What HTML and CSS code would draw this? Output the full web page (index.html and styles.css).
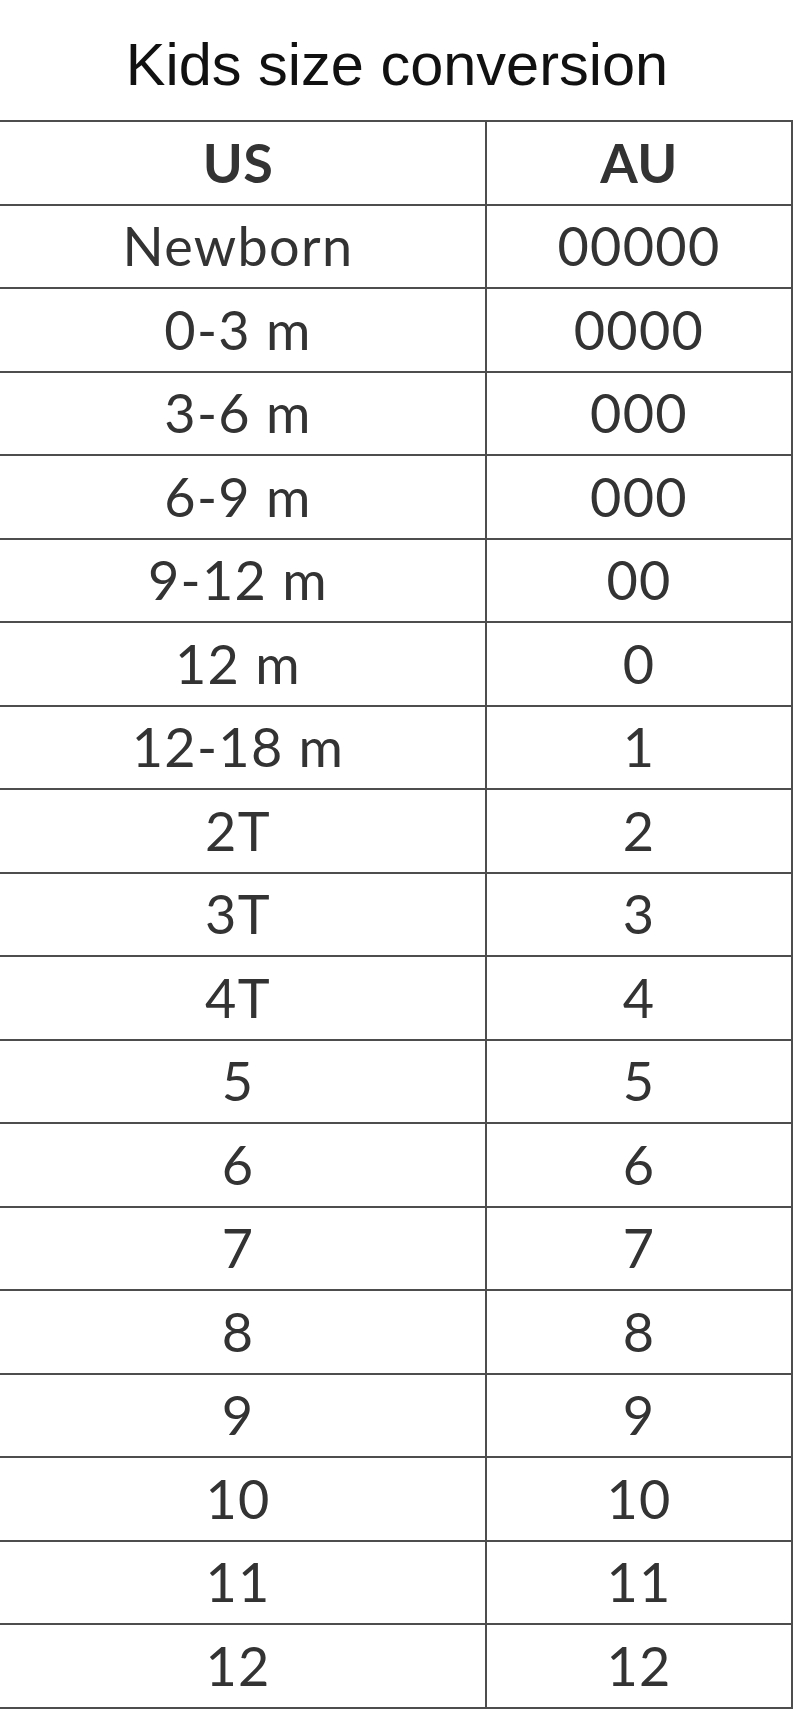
FILE: index.html
```html
<!DOCTYPE html>
<html lang="en">
<head>
<meta charset="utf-8">
<title>Kids size conversion</title>
<link rel="stylesheet" href="styles.css">
</head>
<body>
<div class="page">
  <h1 class="title">Kids size conversion</h1>
  <table class="sizes">
    <thead>
      <tr><th class="col-us">US</th><th class="col-au">AU</th></tr>
    </thead>
    <tbody>
      <tr><td>Newborn</td><td>00000</td></tr>
      <tr><td>0-3 m</td><td>0000</td></tr>
      <tr><td>3-6 m</td><td>000</td></tr>
      <tr><td>6-9 m</td><td>000</td></tr>
      <tr><td>9-12 m</td><td>00</td></tr>
      <tr><td>12 m</td><td>0</td></tr>
      <tr><td>12-18 m</td><td>1</td></tr>
      <tr><td>2T</td><td>2</td></tr>
      <tr><td>3T</td><td>3</td></tr>
      <tr><td>4T</td><td>4</td></tr>
      <tr><td>5</td><td>5</td></tr>
      <tr><td>6</td><td>6</td></tr>
      <tr><td>7</td><td>7</td></tr>
      <tr><td>8</td><td>8</td></tr>
      <tr><td>9</td><td>9</td></tr>
      <tr><td>10</td><td>10</td></tr>
      <tr><td>11</td><td>11</td></tr>
      <tr><td>12</td><td>12</td></tr>
    </tbody>
  </table>
</div>
</body>
</html>
```

FILE: styles.css
```css
html, body {
  margin: 0;
  padding: 0;
  background: #ffffff;
}

.page {
  width: 794px;
  overflow: hidden;
}

.title {
  margin: 31px 0 0;
  padding: 0;
  font-family: "Liberation Sans", Arial, sans-serif;
  font-weight: normal;
  font-size: 59.5px;
  line-height: 68px;
  color: #111111;
  text-align: center;
}

.sizes {
  margin: 21px 0 0 -11px;
  width: 802px;
  border-collapse: collapse;
  table-layout: fixed;
  font-family: Lato, "Noto Sans", sans-serif;
  font-size: 54px;
  letter-spacing: 1.3px;
  color: #333333;
}

.sizes th,
.sizes td {
  border: 2px solid #4d4d4d;
  height: 83.5px;
  padding: 0;
  text-align: center;
  vertical-align: middle;
  line-height: 1;
  box-sizing: border-box;
}

.sizes th {
  font-weight: bold;
  letter-spacing: 0.5px;
}

.col-us {
  width: 496px;
}

.col-au {
  width: 306px;
}
```
